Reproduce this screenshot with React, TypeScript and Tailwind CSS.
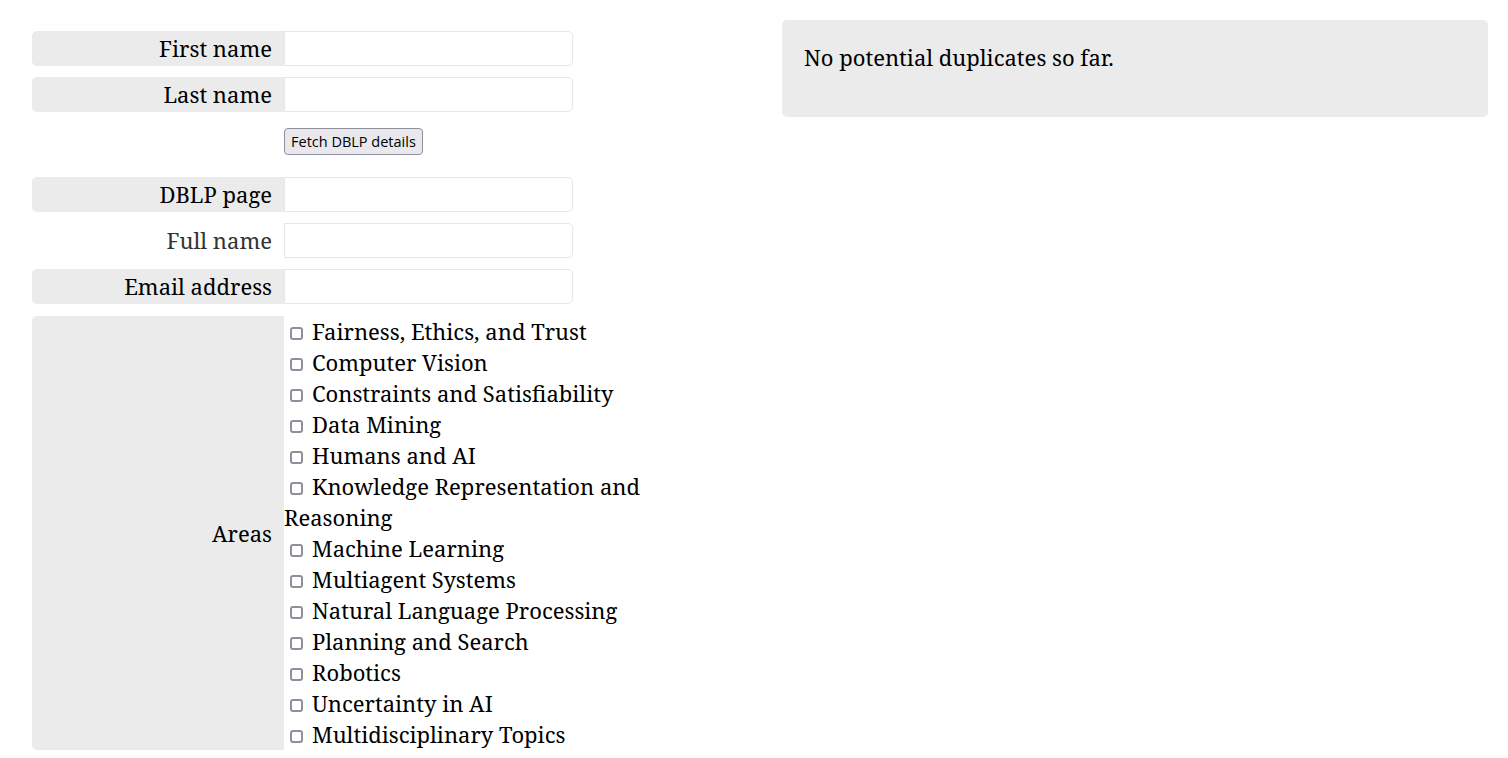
const areas = [
  "Fairness, Ethics, and Trust",
  "Computer Vision",
  "Constraints and Satisfiability",
  "Data Mining",
  "Humans and AI",
  "Knowledge Representation and Reasoning",
  "Machine Learning",
  "Multiagent Systems",
  "Natural Language Processing",
  "Planning and Search",
  "Robotics",
  "Uncertainty in AI",
  "Multidisciplinary Topics",
];

const Field = ({ label, plain }: { label: string; plain?: boolean }) => {
  return (
    <div className="flex h-[35px]">
      <label
        className={
          plain
            ? "w-[252px] flex items-center justify-end pr-3 text-[#333]"
            : "w-[252px] flex items-center justify-end pr-3 bg-[#ebebeb] rounded-l-[5px] text-black"
        }
      >
        {label}
      </label>
      <input
        type="text"
        className="w-[289px] h-[35px] bg-white border border-[#e6e6e6] rounded-r-[5px] outline-none px-2"
      />
    </div>
  );
};

const App = () => {
  return (
    <div
      className="flex w-[1508px] min-h-[758px] bg-white text-[22px] leading-[31px]"
      style={{ fontFamily: '"Noto Serif", "DejaVu Serif", serif' }}
    >
      <div className="w-[782px] pl-8 pt-[31px] flex flex-col">
        <Field label="First name" />
        <div className="mt-[11px]">
          <Field label="Last name" />
        </div>
        <div className="flex pl-[252px] mt-4 mb-[22px]">
          <button
            type="button"
            className="block h-[27px] px-[6px] text-[14.5px] leading-[17px] bg-[#e9e9ed] border border-[#8f8f9d] rounded-[4px] text-black"
            style={{ fontFamily: '"Open Sans", "Noto Sans", sans-serif' }}
          >
            Fetch DBLP details
          </button>
        </div>
        <div className="flex flex-col gap-[11px]">
          <Field label="DBLP page" />
          <Field label="Full name" plain />
          <Field label="Email address" />
          <div className="flex mt-px">
            <div className="w-[252px] flex items-center justify-end pr-3 bg-[#ebebeb] rounded-l-[5px]">
              Areas
            </div>
            <div className="w-[370px]">
              {areas.map((a) => (
                <div key={a}>
                  <input
                    type="checkbox"
                    className="appearance-none inline-block align-middle w-[13px] h-[13px] ml-[6px] mr-[9px] mb-[1px] bg-white border-2 border-[#8f8f9d] rounded-[3px]"
                  />
                  {a}
                </div>
              ))}
            </div>
          </div>
        </div>
      </div>
      <div className="flex-1 mt-5 mr-5">
        <div className="h-[97px] bg-[#ebebeb] rounded-[5px] px-[22px] pt-[22px]">
          No potential duplicates so far.
        </div>
      </div>
    </div>
  );
};

export default App;
